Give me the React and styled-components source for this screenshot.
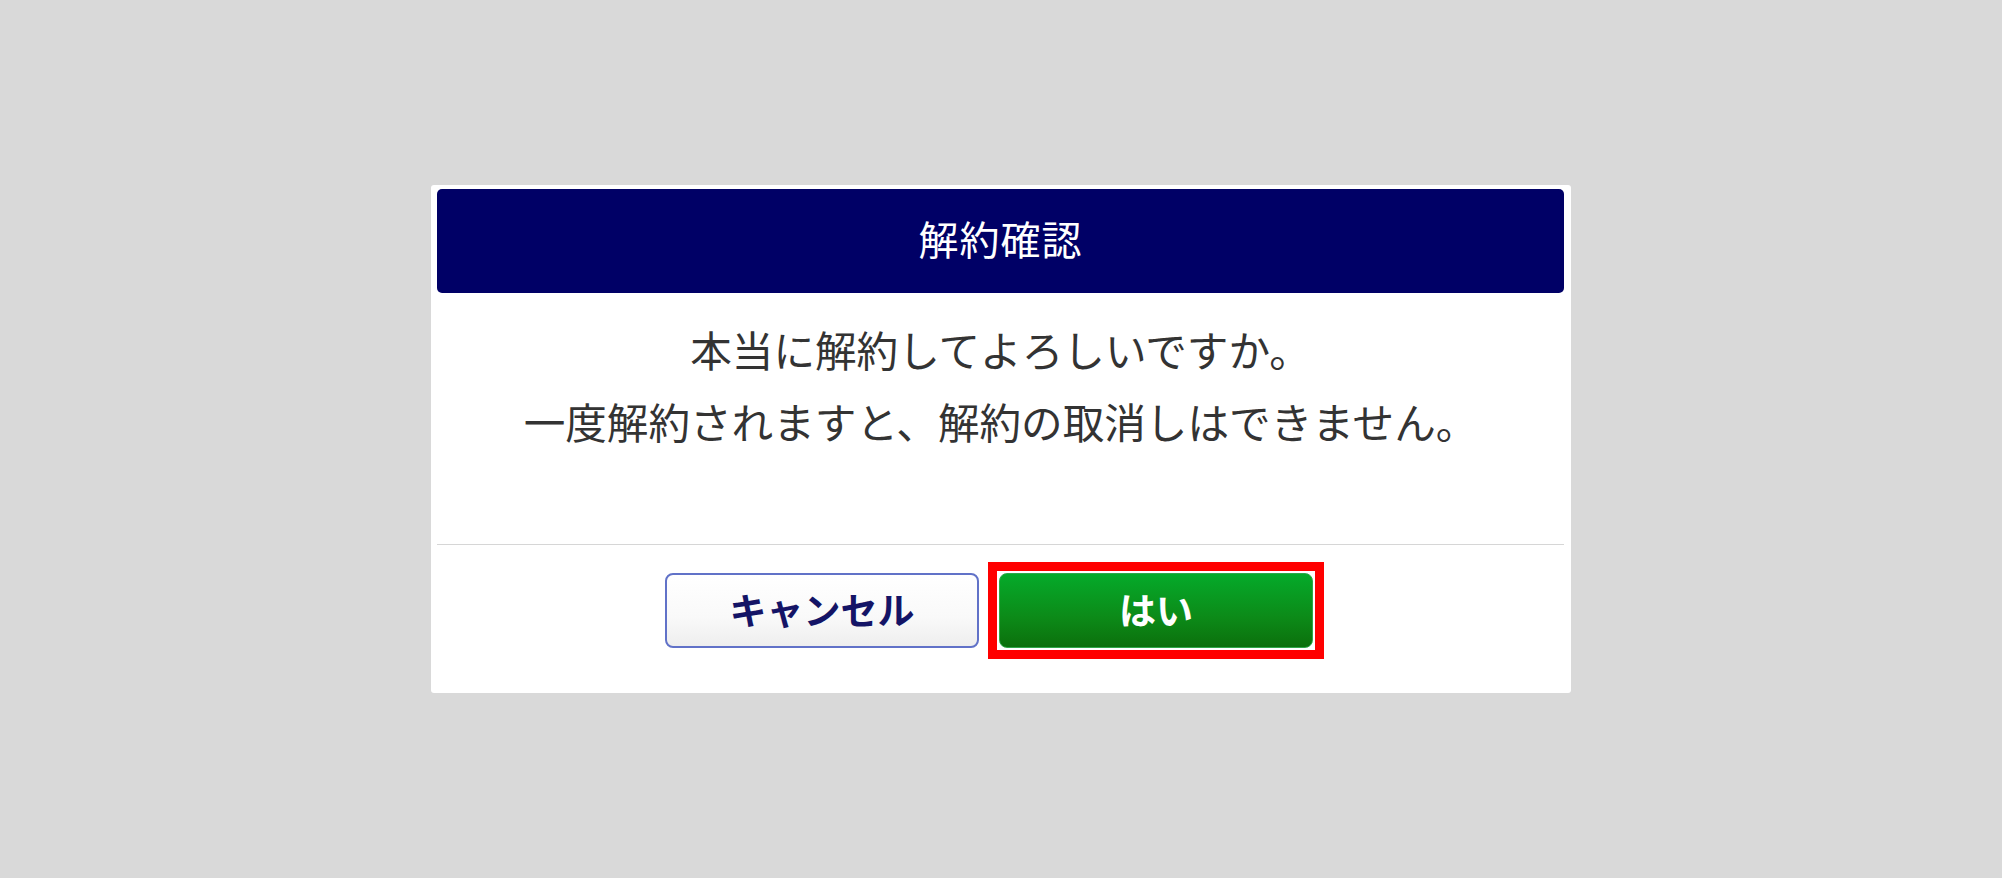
import React from 'react'
import styled, { createGlobalStyle } from 'styled-components'

const GlobalStyle = createGlobalStyle`
  html, body {
    margin: 0;
    padding: 0;
    background: #d9d9d9;
  }
  body {
    font-family: "Noto Sans CJK JP", "Noto Sans", sans-serif;
  }
`;

const Page = styled.div`
  width: 2002px;
  height: 878px;
  display: flex;
  align-items: center;
  justify-content: center;
`;

const Dialog = styled.section`
  width: 1140px;
  box-sizing: border-box;
  padding: 4px 7px 4px 6px;
  background: #fff;
  border-radius: 3px;
  display: flex;
  flex-direction: column;
`;

const Header = styled.h1`
  margin: 0;
  height: 104px;
  display: flex;
  align-items: center;
  justify-content: center;
  padding-bottom: 6px;
  box-sizing: border-box;
  background: #000066;
  border-radius: 5px;
  color: #fff;
  font-size: 40px;
  font-weight: 400;
  letter-spacing: 1px;
`;

const Body = styled.div`
  padding: 20px 0 87px;
  text-align: center;
  color: #333;
  font-size: 41.6px;
  line-height: 72px;
  border-bottom: 1px solid #d6d6d6;

  p {
    margin: 0;
  }
`;

const Footer = styled.div`
  display: flex;
  justify-content: center;
  gap: 20px;
  padding: 28px 23px 41px 0;
`;

const Button = styled.button`
  width: 314px;
  height: 75px;
  box-sizing: border-box;
  border-radius: 8px;
  font-family: inherit;
  font-size: 37px;
  font-weight: 700;
  cursor: pointer;
  display: flex;
  align-items: center;
  justify-content: center;
  padding: 0 0 3px;
  border: ${({ $primary }) => ($primary ? '1px solid #2fa84a' : '2px solid #6172c8')};
  color: ${({ $primary }) => ($primary ? '#fff' : '#141466')};
  background: ${({ $primary }) =>
    $primary
      ? 'linear-gradient(to bottom, #05aa2a 0%, #0c8a18 60%, #0b700c 100%)'
      : 'linear-gradient(to bottom, #ffffff 0%, #f9f9f9 60%, #eeeeee 100%)'};
`;

const Highlight = styled.span`
  display: inline-flex;
  outline: 9px solid #ff0000;
  outline-offset: 2px;
`;

export default function App() {
  return (
    <>
      <GlobalStyle />
      <Page>
        <Dialog>
          <Header>解約確認</Header>
          <Body>
            <p>本当に解約してよろしいですか。</p>
            <p>一度解約されますと、解約の取消しはできません。</p>
          </Body>
          <Footer>
            <Button>キャンセル</Button>
            <Highlight>
              <Button $primary>はい</Button>
            </Highlight>
          </Footer>
        </Dialog>
      </Page>
    </>
  )
}
